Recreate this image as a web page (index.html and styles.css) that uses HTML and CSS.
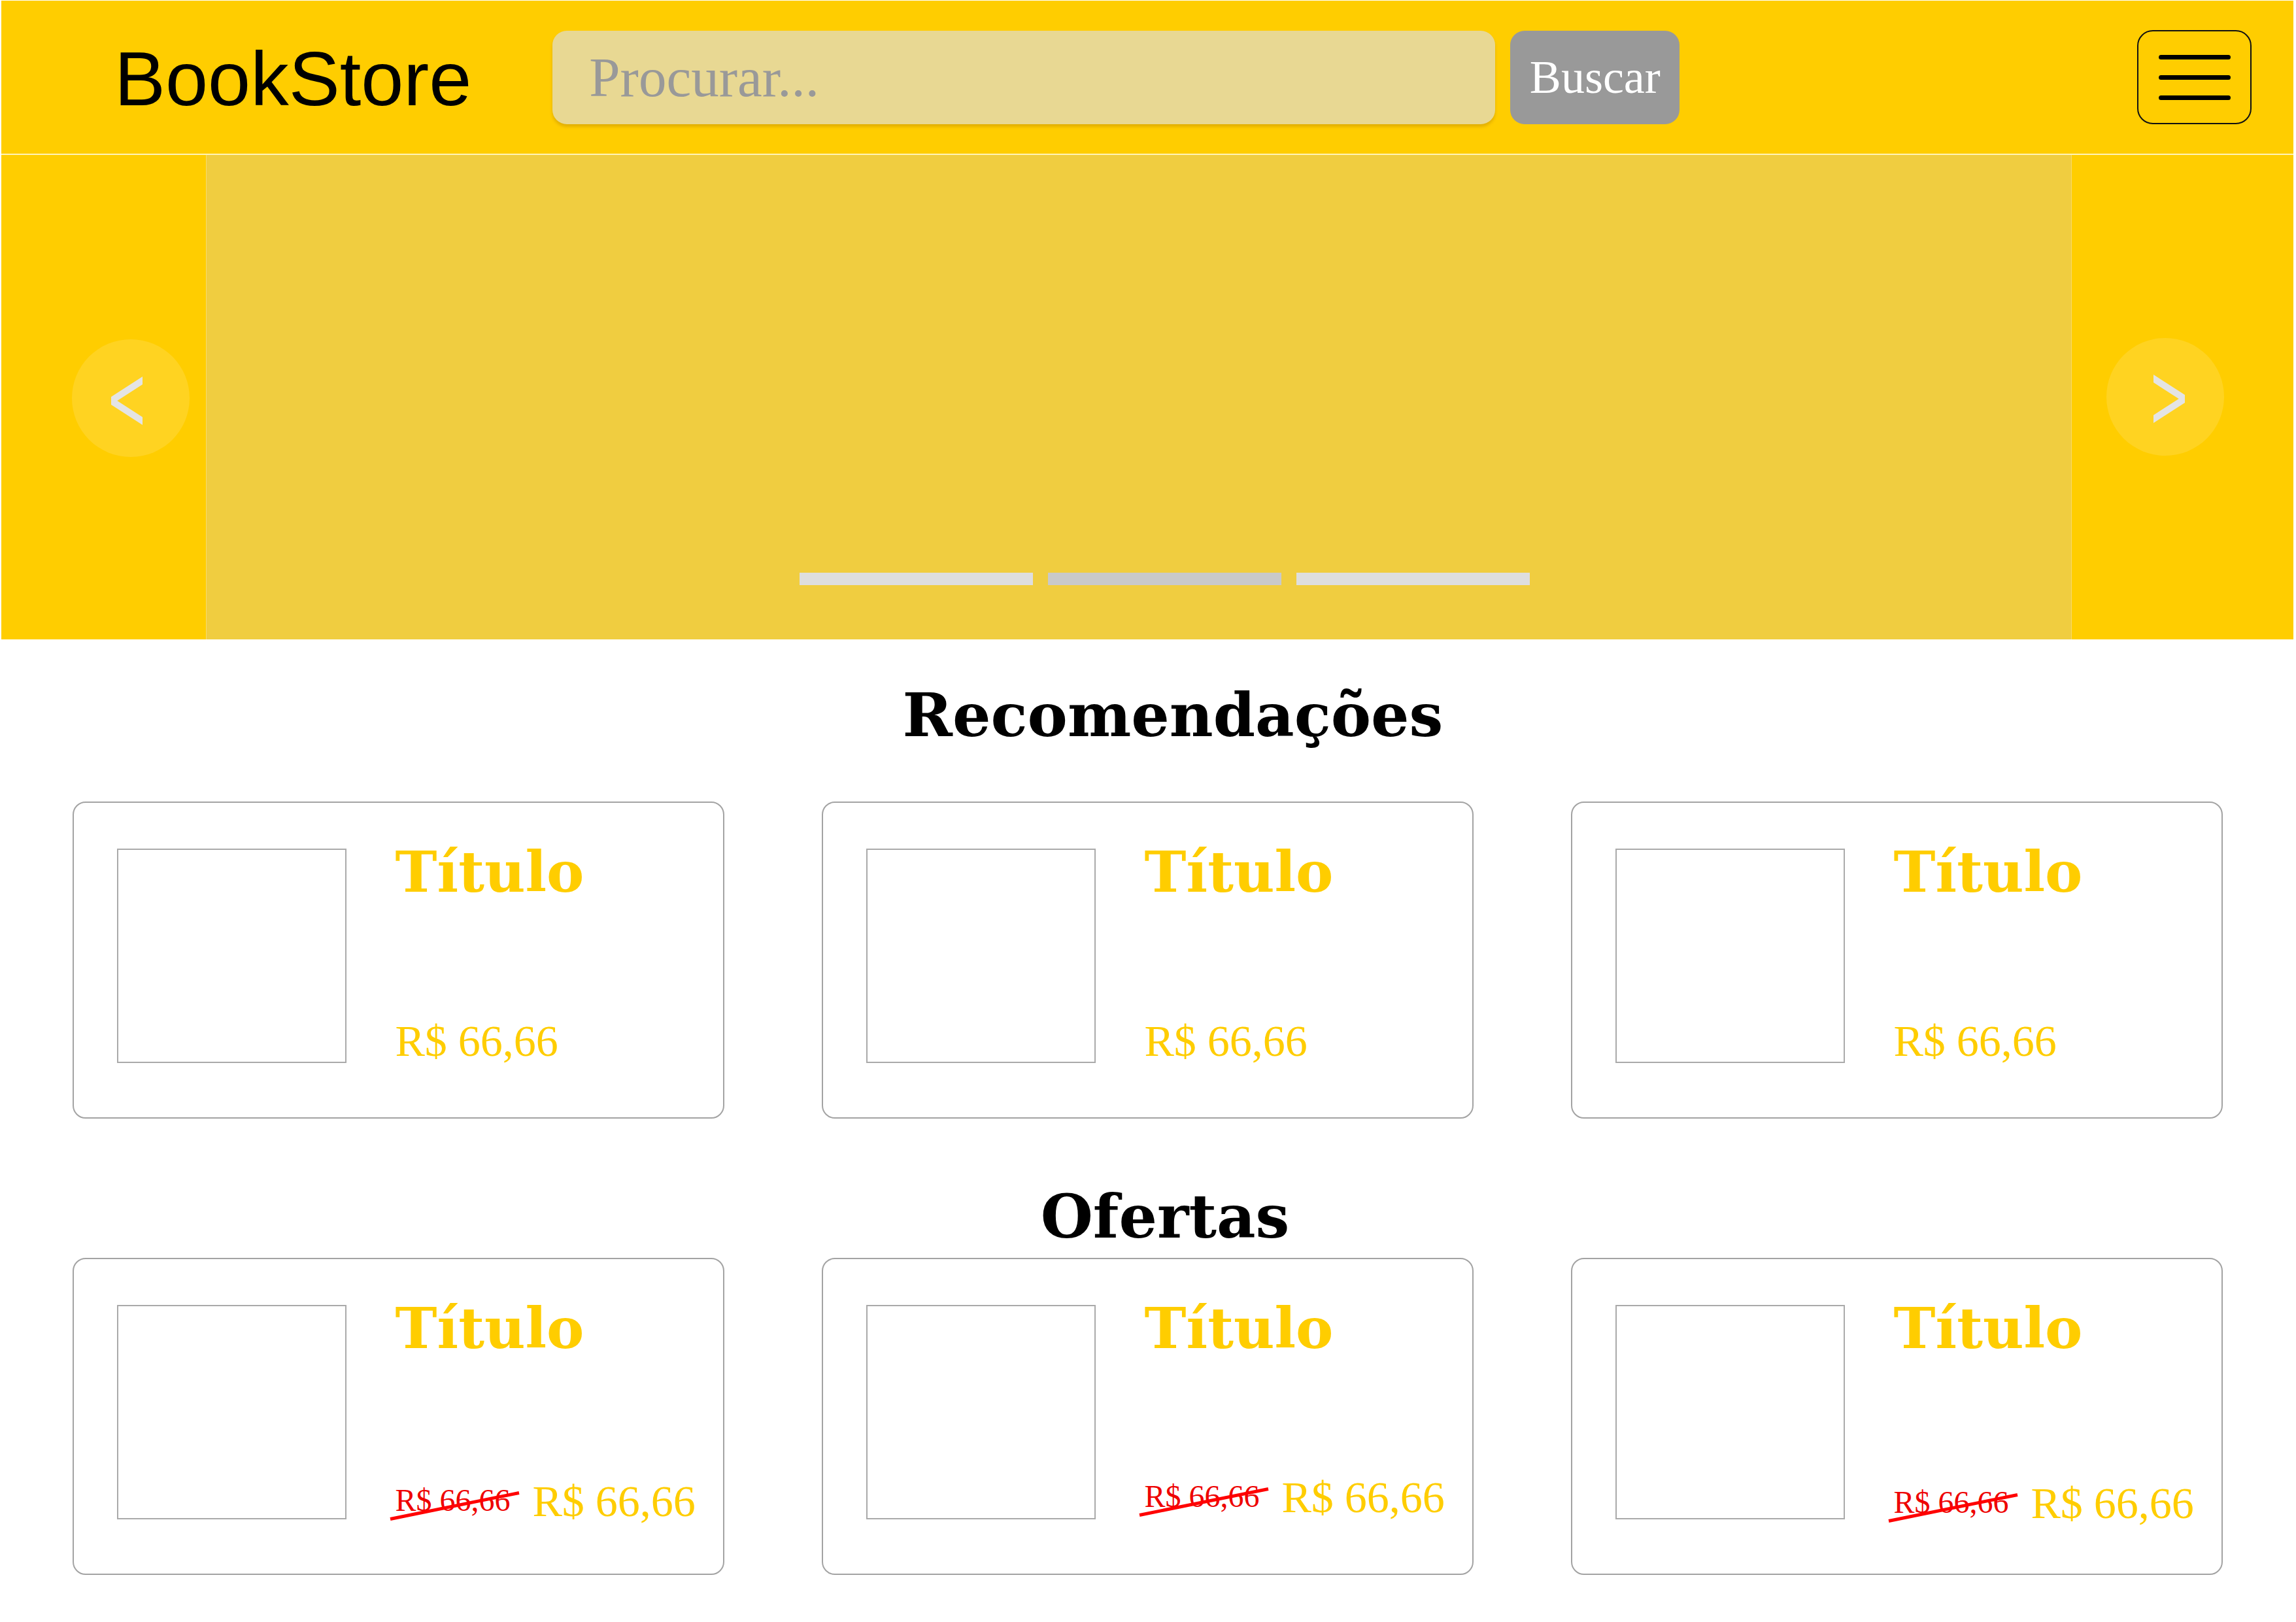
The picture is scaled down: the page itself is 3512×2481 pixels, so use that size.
FILE: index.html
```html
<!DOCTYPE html>
<html lang="pt-BR">
<head>
<meta charset="utf-8">
<title>BookStore</title>
<link rel="stylesheet" href="styles.css">
</head>
<body>
<header class="topbar">
  <div class="brand">BookStore</div>
  <form class="search">
    <input class="search-input" type="text" placeholder="Procurar...">
    <button class="search-btn" type="button">Buscar</button>
  </form>
  <button class="menu" type="button" aria-label="Menu">
    <span class="menu-line"></span>
    <span class="menu-line"></span>
    <span class="menu-line"></span>
  </button>
</header>

<section class="carousel">
  <div class="side side-left"></div>
  <div class="slide"></div>
  <div class="side side-right"></div>
  <button class="ctrl ctrl-prev" type="button" aria-label="Anterior">
    <svg class="chev" width="48" height="74" viewBox="0 0 48 74"><polygon points="48,0 0,31 0,43 48,74 48,62 9.3,37 48,12" fill="#e4e4e4"/></svg>
  </button>
  <button class="ctrl ctrl-next" type="button" aria-label="Próximo">
    <svg class="chev" width="48" height="74" viewBox="0 0 48 74"><polygon points="0,0 48,31 48,43 0,74 0,62 38.7,37 0,12" fill="#e4e4e4"/></svg>
  </button>
  <div class="indicators">
    <span class="ind"></span>
    <span class="ind ind-active"></span>
    <span class="ind"></span>
  </div>
</section>

<main class="content">
  <h2 class="section-title title-rec">Recomendações</h2>
  <div class="grid">
    <article class="card">
      <div class="cover"></div>
      <div class="info">
        <h3 class="book-title">Título</h3>
        <div class="price">R$ 66,66</div>
      </div>
    </article>
    <article class="card">
      <div class="cover"></div>
      <div class="info">
        <h3 class="book-title">Título</h3>
        <div class="price">R$ 66,66</div>
      </div>
    </article>
    <article class="card">
      <div class="cover"></div>
      <div class="info">
        <h3 class="book-title">Título</h3>
        <div class="price">R$ 66,66</div>
      </div>
    </article>
  </div>

  <h2 class="section-title title-offers">Ofertas</h2>
  <div class="grid">
    <article class="card">
      <div class="cover"></div>
      <div class="info">
        <h3 class="book-title">Título</h3>
        <div class="price-row">
          <span class="old-price">R$ 66,66</span>
          <span class="price">R$ 66,66</span>
        </div>
      </div>
    </article>
    <article class="card">
      <div class="cover"></div>
      <div class="info">
        <h3 class="book-title">Título</h3>
        <div class="price-row price-row-raised">
          <span class="old-price">R$ 66,66</span>
          <span class="price">R$ 66,66</span>
        </div>
      </div>
    </article>
    <article class="card">
      <div class="cover"></div>
      <div class="info">
        <h3 class="book-title">Título</h3>
        <div class="price-row price-row-lowered">
          <span class="old-price">R$ 66,66</span>
          <span class="price">R$ 66,66</span>
        </div>
      </div>
    </article>
  </div>
</main>
</body>
</html>
```

FILE: styles.css
```css
* {
  box-sizing: border-box;
}

html {
  background: #ffffff;
}

body {
  margin: 1px 4px 0 2px;
  background: #ffffff;
  font-family: "Liberation Serif", serif;
}

/* ---------- Header ---------- */
.topbar {
  display: flex;
  align-items: center;
  height: 236px;
  padding-left: 173px;
  padding-right: 64px;
  background: #ffcd00;
  border-bottom: 2px solid #fff3b8;
}

.brand {
  font-family: "Liberation Sans", Arial, sans-serif;
  font-size: 117px;
  line-height: 1;
  color: #000000;
  margin-right: 124px;
  margin-top: 4px;
}

.search {
  display: flex;
  align-items: center;
  gap: 23px;
  margin: 0;
}

.search-input {
  width: 1442px;
  height: 143px;
  border: none;
  border-radius: 22px;
  background: #e8d893;
  padding: 0 0 0 56px;
  font-family: "Liberation Serif", serif;
  font-size: 85px;
  color: #555555;
  box-shadow: 0 4px 4px rgba(190, 140, 0, 0.45);
  outline: none;
}

.search-input::placeholder {
  color: #999999;
}

.search-btn {
  width: 259px;
  height: 143px;
  border: none;
  border-radius: 22px;
  background: #999999;
  color: #ffffff;
  font-family: "Liberation Serif", serif;
  font-size: 72px;
  padding: 0;
}

.menu {
  margin-left: auto;
  width: 175px;
  height: 144px;
  border: 2px solid #111111;
  border-radius: 24px;
  background: transparent;
  display: flex;
  flex-direction: column;
  align-items: center;
  justify-content: center;
  gap: 24px;
  padding: 0;
}

.menu-line {
  display: block;
  width: 110px;
  height: 7px;
  border-radius: 4px;
  background: #000000;
}

/* ---------- Carousel ---------- */
.carousel {
  position: relative;
  display: flex;
  height: 741px;
  background: #ffcd00;
}

.side-left {
  width: 313px;
  background: #ffcd00;
}

.side-right {
  width: 339px;
  background: #ffcd00;
}

.slide {
  flex: 1;
  background: #f0cd40;
  border-left: 1px solid #f7da6a;
  border-right: 1px solid #f7da6a;
}

.ctrl {
  position: absolute;
  width: 180px;
  height: 180px;
  border: none;
  border-radius: 50%;
  background: rgba(255, 255, 255, 0.13);
  padding: 0;
  display: flex;
  align-items: center;
  justify-content: center;
}

.ctrl-prev {
  left: 108px;
  top: 282px;
}

.ctrl-prev .chev {
  margin-left: -12px;
  margin-top: 8px;
}

.ctrl-next {
  right: 106px;
  top: 280px;
}

.ctrl-next .chev {
  margin-left: 12px;
  margin-top: 6px;
}

.indicators {
  position: absolute;
  left: 1221px;
  bottom: 83px;
  display: flex;
  gap: 23px;
}

.ind {
  display: block;
  width: 357px;
  height: 19px;
  background: #dedede;
}

.ind-active {
  background: #c9c9c9;
}

/* ---------- Content ---------- */
.content {
  padding-bottom: 72px;
}

.section-title {
  font-family: "DejaVu Serif", serif;
  font-weight: bold;
  font-size: 92px;
  line-height: 1;
  color: #000000;
  text-align: center;
  padding-left: 78px;
}

.title-rec {
  margin: 70px 0 86px;
}

.title-offers {
  margin: 104px 0 17px;
  padding-left: 54px;
}

.grid {
  display: grid;
  grid-template-columns: repeat(3, 997px);
  column-gap: 149px;
  justify-content: center;
}

.card {
  display: flex;
  align-items: stretch;
  padding: 70px 0 83px 66px;
  border: 2px solid #a3a3a3;
  border-radius: 20px;
  background: #ffffff;
}

.cover {
  width: 351px;
  height: 328px;
  border: 2px solid #aaaaaa;
  flex: none;
}

.info {
  display: flex;
  flex-direction: column;
  justify-content: space-between;
  margin-left: 75px;
}

.book-title {
  margin: -7px 0 0;
  font-family: "DejaVu Serif", serif;
  font-weight: bold;
  font-size: 86px;
  line-height: 1;
  color: #ffcd00;
}

.price {
  font-family: "Liberation Serif", serif;
  font-size: 68px;
  line-height: 1;
  color: #ffcd00;
}

.price-row {
  display: flex;
  align-items: flex-end;
  gap: 34px;
  margin-bottom: -6px;
}

.price-row-raised {
  margin-bottom: 0;
}

.price-row-lowered {
  margin-bottom: -9px;
}

.old-price {
  position: relative;
  font-family: "Liberation Serif", serif;
  font-size: 48px;
  line-height: 1;
  color: #ee0000;
  margin-bottom: 11px;
  white-space: nowrap;
}

.old-price::after {
  content: "";
  position: absolute;
  left: -10px;
  right: -15px;
  top: 30px;
  height: 5px;
  background: #ff0000;
  transform: rotate(-11.5deg);
}
```
